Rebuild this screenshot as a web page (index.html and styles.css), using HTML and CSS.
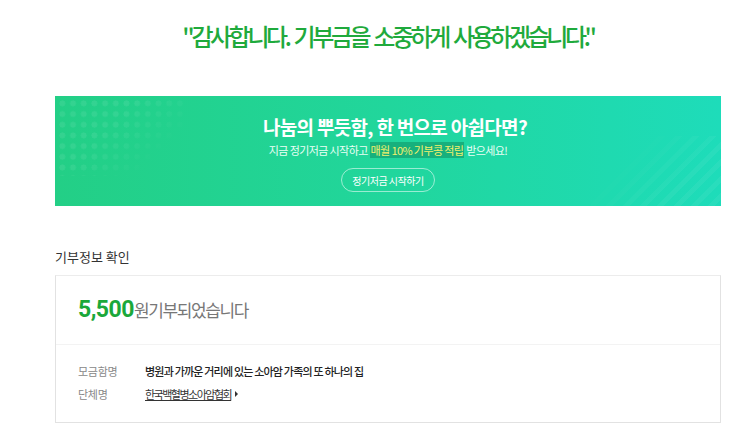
FILE: index.html
```html
<!DOCTYPE html>
<html>
<head>
    <meta charset="UTF-8">
    <title>기부 완료</title>
    <link rel="stylesheet" href="styles.css">
</head>
<body>
<div class="page">
    <h1 class="thanks">"감사합니다. 기부금을 소중하게 사용하겠습니다."</h1>

    <div class="banner">
        <div class="banner-dots"></div>
        <div class="banner-stripes"></div>
        <div class="banner-body">
            <p class="banner-title">나눔의 뿌듯함, 한 번으로 아쉽다면?</p>
            <p class="banner-sub">지금 정기저금 시작하고 <span class="mark">매월 10% 기부콩 적립</span> 받으세요!</p>
            <button class="banner-btn">정기저금 시작하기</button>
        </div>
    </div>

    <h2 class="section-title">기부정보 확인</h2>
    <div class="card">
        <div class="card-head">
            <span class="amount">5,500</span><span class="amount-text">원기부되었습니다</span>
        </div>
        <div class="card-rows">
            <div class="row">
                <span class="row-label">모금함명</span>
                <span class="row-value">병원과 가까운 거리에 있는 소아암 가족의 또 하나의 집</span>
            </div>
            <div class="row">
                <span class="row-label">단체명</span>
                <a class="row-link" href="#">한국백혈병소아암협회</a><span class="arrow"></span>
            </div>
        </div>
    </div>
</div>
</body>
</html>
```

FILE: styles.css
```css
body {
    margin: 0;
    padding: 0;
    background-color: #fff;
    font-family: "Noto Sans CJK KR", "Noto Sans", sans-serif;
    color: #333;
}

.page {
    width: 666px;
    margin-left: 55px;
}

.thanks {
    margin: 0;
    padding-top: 16px;
    height: 96px;
    box-sizing: border-box;
    text-align: center;
    font-size: 24px;
    font-weight: 500;
    letter-spacing: -3.4px;
    word-spacing: 3px;
    line-height: 40px;
    color: #1faa3c;
}

.banner {
    position: relative;
    height: 110px;
    overflow: hidden;
    background: linear-gradient(90deg, #23cf86 0%, #21d69c 50%, #1edcba 100%);
}

.banner-dots {
    position: absolute;
    left: 0;
    top: 0;
    width: 130px;
    height: 80px;
    background-image: radial-gradient(circle, rgba(255, 255, 255, 0.08) 2.8px, transparent 3.2px);
    background-size: 10.7px 10.7px;
    background-position: 2px 2px;
    -webkit-mask-image: linear-gradient(135deg, #000 40%, transparent 80%);
    mask-image: linear-gradient(135deg, #000 40%, transparent 80%);
}

.banner-stripes {
    position: absolute;
    right: 0;
    bottom: 0;
    width: 130px;
    height: 70px;
    background-image: repeating-linear-gradient(135deg, rgba(255, 255, 255, 0.05) 0 5px, transparent 5px 12px);
    -webkit-mask-image: linear-gradient(315deg, #000 30%, transparent 75%);
    mask-image: linear-gradient(315deg, #000 30%, transparent 75%);
}

.banner-body {
    position: relative;
    display: flex;
    flex-direction: column;
    align-items: center;
}

.banner-title {
    margin: 19px 0 0;
    padding-left: 14px;
    font-size: 19px;
    font-weight: 700;
    letter-spacing: -0.7px;
    line-height: 24px;
    color: #fff;
}

.banner-sub {
    margin: 4px 0 0;
    font-size: 11px;
    letter-spacing: -0.6px;
    line-height: 14px;
    color: #eafff5;
}

.mark {
    background-color: #17b07d;
    color: #f2f06b;
    padding: 0 1px;
}

.banner-btn {
    margin-top: 11px;
    width: 94px;
    height: 24px;
    border: 1px solid rgba(255, 255, 255, 0.55);
    border-radius: 12px;
    background: transparent;
    color: #fff;
    font-family: inherit;
    font-size: 10px;
    letter-spacing: -0.5px;
    padding: 0;
}

.section-title {
    margin: 40px 0 0;
    font-size: 13px;
    font-weight: 400;
    line-height: 22px;
    color: #333;
}

.card {
    margin-top: 7px;
    border: 1px solid #e2e2e2;
    border-top-color: #ececec;
    height: 148px;
    box-sizing: border-box;
}

.card-head {
    display: flex;
    align-items: baseline;
    height: 69px;
    box-sizing: border-box;
    padding: 20px 0 0 22px;
    border-bottom: 1px solid #f3f3f3;
}

.amount {
    font-family: Roboto, "Noto Sans", sans-serif;
    font-size: 23px;
    font-weight: 700;
    letter-spacing: -0.5px;
    color: #1ba83a;
}

.amount-text {
    font-size: 17px;
    letter-spacing: -1.4px;
    color: #777;
}

.card-rows {
    display: flex;
    flex-direction: column;
    gap: 5px;
    padding: 17px 0 0 22px;
}

.row {
    display: flex;
    align-items: center;
    height: 18px;
    font-size: 11px;
}

.row-label {
    width: 67px;
    color: #888;
    letter-spacing: -0.3px;
}

.row-value {
    font-weight: 500;
    color: #222;
    letter-spacing: -0.8px;
}

.row-link {
    color: #333;
    letter-spacing: -1.5px;
    text-decoration: underline;
}

.arrow {
    margin-left: 4px;
    width: 0;
    height: 0;
    border-top: 3px solid transparent;
    border-bottom: 3px solid transparent;
    border-left: 3px solid #333;
}
```
